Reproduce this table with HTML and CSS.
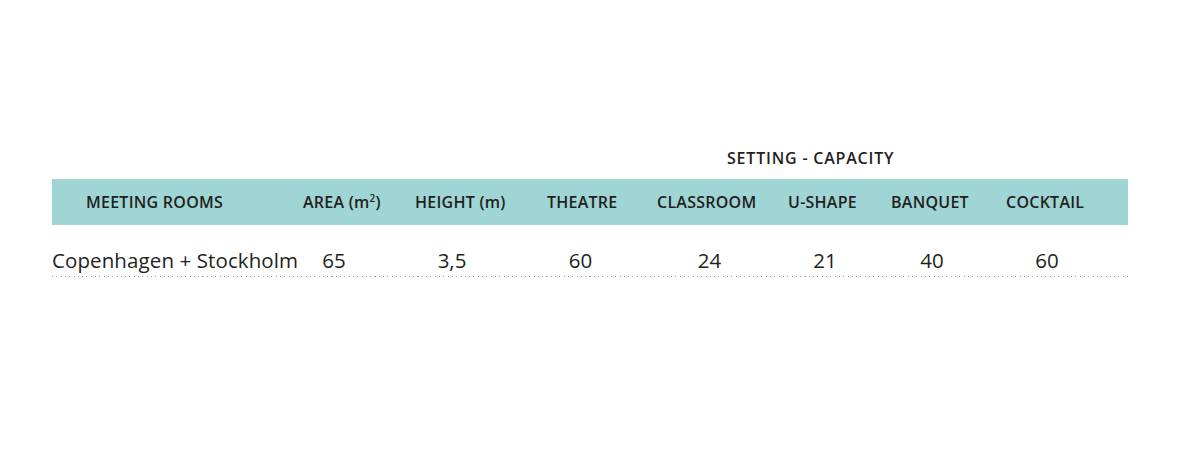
FILE: index.html
```html
<!DOCTYPE html>
<html>
<head>
<meta charset="utf-8">
<link rel="stylesheet" href="styles.css">
</head>
<body>
<div class="wrap">
  <div class="group-title">SETTING - CAPACITY</div>
  <div class="head">
    <div class="hc first">MEETING ROOMS</div>
    <div class="hc">AREA (m<sup>2</sup>)</div>
    <div class="hc">HEIGHT (m)</div>
    <div class="hc">THEATRE</div>
    <div class="hc">CLASSROOM</div>
    <div class="hc">U-SHAPE</div>
    <div class="hc">BANQUET</div>
    <div class="hc">COCKTAIL</div>
  </div>
  <div class="row">
    <div class="dc name">Copenhagen + Stockholm</div>
    <div class="dc">65</div>
    <div class="dc">3,5</div>
    <div class="dc">60</div>
    <div class="dc">24</div>
    <div class="dc">21</div>
    <div class="dc">40</div>
    <div class="dc">60</div>
  </div>
  <div class="dots"></div>
</div>
</body>
</html>
```
FILE: styles.css
```css
html, body {
  margin: 0;
  padding: 0;
  background: #ffffff;
}
.wrap {
  width: 1076px;
  margin-left: 52px;
  padding-top: 148px;
  font-family: "Open Sans", "Noto Sans", sans-serif;
  color: #231f20;
}
.group-title {
  margin-left: 675px;
  font-size: 16px;
  line-height: 20px;
  font-weight: 600;
  letter-spacing: 0.8px;
  margin-bottom: 11px;
}
.head {
  display: grid;
  grid-template-columns: 251px 112px 132px 110px 131px 103px 115px 122px;
  height: 46px;
  align-items: center;
  background: #a0d5d5;
}
.hc {
  font-size: 16px;
  line-height: 20px;
  font-weight: 600;
  letter-spacing: 0.25px;
  white-space: nowrap;
}
.hc.first {
  padding-left: 34px;
}
.hc sup {
  font-size: 10px;
  line-height: 0;
  vertical-align: 6px;
}
.row {
  display: grid;
  grid-template-columns: 245px 74px 162px 95px 163px 68px 146px 84px;
  margin-top: 20px;
}
.dc {
  font-size: 20.5px;
  line-height: 30px;
  text-align: center;
  white-space: nowrap;
}
.dc.name {
  text-align: left;
  letter-spacing: 0.1px;
}
.dots {
  margin-top: 1px;
  height: 1px;
  background: repeating-linear-gradient(to right, #9a9a9a 0 1px, transparent 1px 4.3px);
}
```
